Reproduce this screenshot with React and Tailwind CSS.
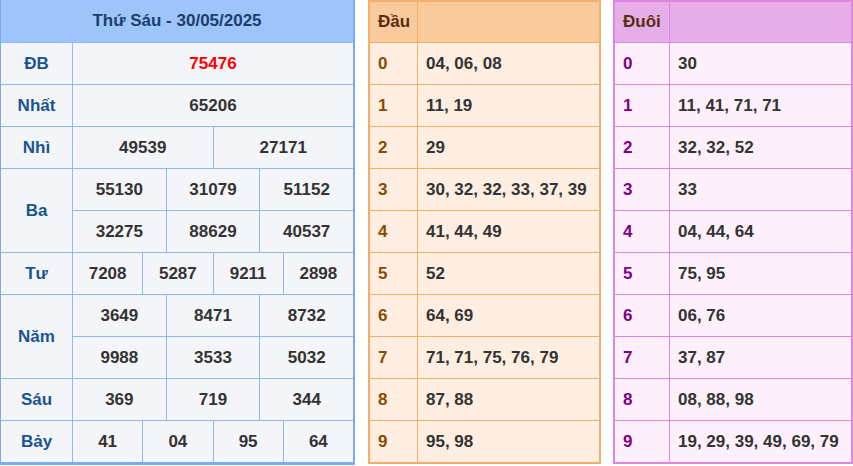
const F = { fontFamily: '"Liberation Sans", Arial, sans-serif' };

function LRow({ label, rows, h = 42, red }) {
  return (
    <div className="flex border-t border-[#8fb8f0]" style={{ height: h * rows.length }}>
      <div className="w-[72px] shrink-0 flex items-center justify-center text-[#1a5590] border-r border-[#8fb8f0]">{label}</div>
      <div className="flex-1 flex flex-col">
        {rows.map((r, i) => (
          <div key={i} className={"flex flex-1 " + (i > 0 ? "border-t border-[#8fb8f0]" : "")}>
            {r.map((v, j) => (
              <div key={j} className={"flex-1 flex items-center justify-center " + (j > 0 ? "border-l border-[#8fb8f0] " : "") + (red ? "text-[#ff0000]" : "text-[#333]")}>{v}</div>
            ))}
          </div>
        ))}
      </div>
    </div>
  );
}

function Side({ title, data, c, w }) {
  return (
    <div className={"flex flex-col border-2 " + c.border + " " + c.bg} style={{ height: 464 }}>
      <div className={"flex h-[40px] " + c.head}>
        <div className={"flex items-center pl-[8px] border-r " + c.line + " text-[#5a2d0c]"} style={{ width: w }}>{title}</div>
        <div className="flex-1" />
      </div>
      {data.map((d, i) => (
        <div key={i} className={"flex h-[42px] border-t " + c.line}>
          <div className={"flex items-center pl-[8px] border-r " + c.line + " " + c.digit} style={{ width: w }}>{i}</div>
          <div className="flex-1 flex items-center pl-[8px] text-[#333]">{d}</div>
        </div>
      ))}
    </div>
  );
}

export default function App() {
  return (
    <div className="w-[853px] h-[466px] bg-white flex font-bold text-[17px]" style={F}>
      <div className="w-[355px] h-[465px] border-r-2 border-b-[3px] border-l border-[#7aaaf0] bg-[#f3f5f9] flex flex-col">
        <div className="h-[42px] bg-[#9ec5fa] flex items-center justify-center text-[#1a3d6e]">Thứ Sáu - 30/05/2025</div>
        <LRow label="ĐB" rows={[["75476"]]} red />
        <LRow label="Nhất" rows={[["65206"]]} />
        <LRow label="Nhì" rows={[["49539", "27171"]]} />
        <LRow label="Ba" rows={[["55130", "31079", "51152"], ["32275", "88629", "40537"]]} />
        <LRow label="Tư" rows={[["7208", "5287", "9211", "2898"]]} />
        <LRow label="Năm" rows={[["3649", "8471", "8732"], ["9988", "3533", "5032"]]} />
        <LRow label="Sáu" rows={[["369", "719", "344"]]} />
        <LRow label="Bảy" rows={[["41", "04", "95", "64"]]} />
      </div>
      <div className="w-[13px]" />
      <div className="w-[233px]">
        <Side title="Đầu" w={48} data={["04, 06, 08", "11, 19", "29", "30, 32, 32, 33, 37, 39", "41, 44, 49", "52", "64, 69", "71, 71, 75, 76, 79", "87, 88", "95, 98"]}
          c={{ border: "border-[#f5ad6a]", bg: "bg-[#fdeee1]", head: "bg-[#f9cb9c]", line: "border-[#f5ad6a]", digit: "text-[#8a4b00]" }} />
      </div>
      <div className="w-[12px]" />
      <div className="w-[240px]">
        <Side title="Đuôi" w={55} data={["30", "11, 41, 71, 71", "32, 32, 52", "33", "04, 44, 64", "75, 95", "06, 76", "37, 87", "08, 88, 98", "19, 29, 39, 49, 69, 79"]}
          c={{ border: "border-[#e285e0]", bg: "bg-[#fdf0fb]", head: "bg-[#e5aee8]", line: "border-[#e285e0]", digit: "text-[#800080]" }} />
      </div>
    </div>
  );
}
